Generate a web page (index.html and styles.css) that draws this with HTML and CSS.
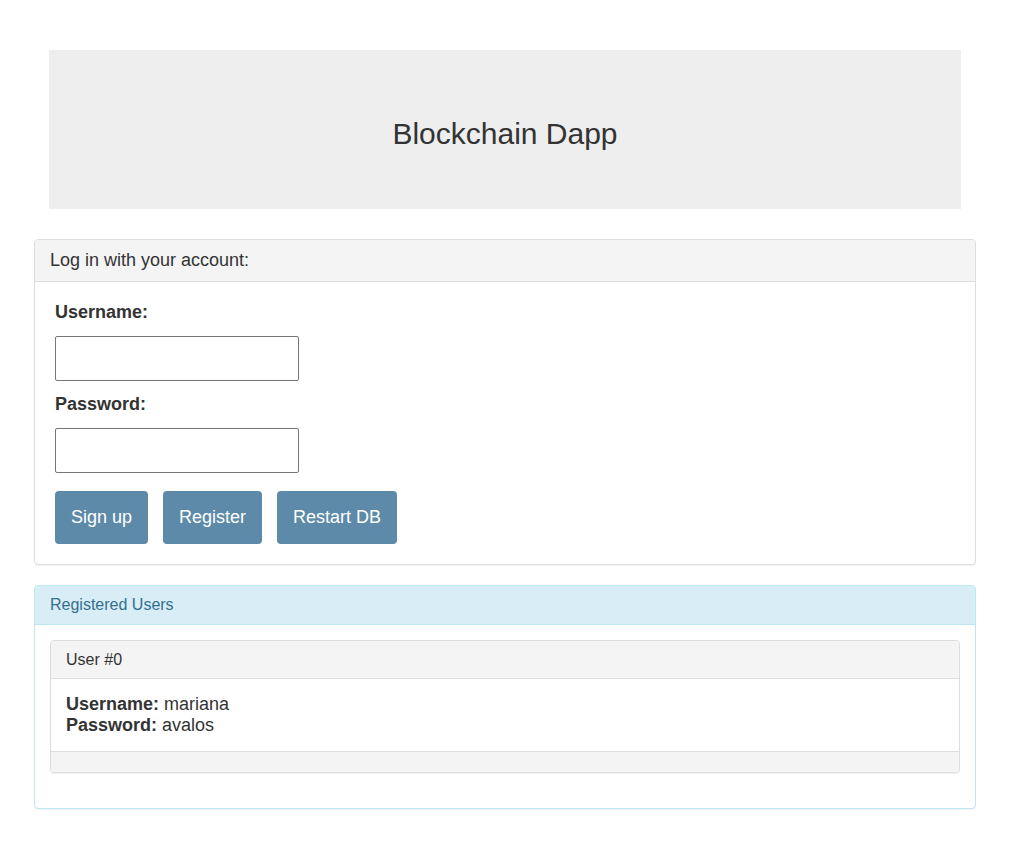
FILE: index.html
```html
<!DOCTYPE html>
<html>
<head>
<meta charset="utf-8">
<title>Blockchain Dapp</title>
<link rel="stylesheet" href="styles.css">
</head>
<body>
<div class="container">
  <div class="jumbotron">
    <h1 class="title">Blockchain Dapp</h1>
  </div>

  <div class="panel panel-default">
    <div class="panel-heading login-heading">Log in with your account:</div>
    <div class="panel-body login-body">
      <label class="field-label" for="username">Username:</label>
      <input class="field-input" id="username" type="text">
      <label class="field-label" for="password">Password:</label>
      <input class="field-input" id="password" type="password">
      <div class="btn-row">
        <button class="btn">Sign up</button>
        <button class="btn">Register</button>
        <button class="btn">Restart DB</button>
      </div>
    </div>
  </div>

  <div class="panel panel-info">
    <div class="panel-heading info-heading">Registered Users</div>
    <div class="panel-body users-body">
      <div class="panel panel-default user-panel">
        <div class="panel-heading user-heading">User #0</div>
        <div class="user-body">
          <div><b>Username:</b> mariana</div>
          <div><b>Password:</b> avalos</div>
        </div>
        <div class="user-footer"></div>
      </div>
    </div>
  </div>
</div>
</body>
</html>
```

FILE: styles.css
```css
* { box-sizing: border-box; }

body {
  margin: 0;
  font-family: "Liberation Sans", Arial, sans-serif;
  color: #333;
  background: #fff;
}

.container {
  width: 942px;
  margin-left: 34px;
  padding-top: 50px;
}

.jumbotron {
  margin: 0 15px 30px;
  height: 159px;
  background: #eeeeee;
  display: flex;
  align-items: center;
  justify-content: center;
  padding-top: 8px;
}

.title {
  margin: 0;
  font-size: 30px;
  font-weight: normal;
  color: #333;
}

.panel {
  border: 1px solid #ddd;
  border-radius: 4px;
  background: #fff;
  margin-bottom: 20px;
  box-shadow: 0 1px 1px rgba(0,0,0,0.05);
}

.panel-heading {
  border-bottom: 1px solid #ddd;
  background: #f4f4f4;
  border-radius: 3px 3px 0 0;
}

.login-heading {
  padding: 10px 15px;
  font-size: 18px;
  line-height: 21px;
}

.login-body {
  padding: 19px 20px 20px;
}

.field-label {
  display: block;
  font-size: 18px;
  font-weight: bold;
  line-height: 22px;
  margin-bottom: 13px;
}

.field-input {
  display: block;
  width: 244px;
  height: 45px;
  border: 1px solid #767676;
  border-radius: 2px;
  margin: 0 0 12px;
  font-size: 18px;
  padding: 4px 8px;
}

.btn-row {
  display: flex;
  gap: 15px;
  margin-top: 18px;
}

.btn {
  height: 53px;
  padding: 0 16px;
  background: #5d8aa8;
  color: #fff;
  border: none;
  border-radius: 4px;
  font-family: "Liberation Sans", Arial, sans-serif;
  font-size: 18px;
}

.panel-info {
  border-color: #bce8f1;
}

.info-heading {
  background: #d9edf7;
  border-bottom-color: #bce8f1;
  color: #31708f;
  padding: 10px 15px;
  font-size: 16px;
  line-height: 18px;
}

.users-body {
  padding: 15px;
}

.user-panel {
  margin-bottom: 20px;
}

.user-heading {
  padding: 10px 15px;
  font-size: 16px;
  line-height: 17px;
}

.user-body {
  padding: 15px;
  font-size: 18px;
  line-height: 21px;
}

.user-footer {
  height: 21px;
  background: #f4f4f4;
  border-top: 1px solid #ddd;
  border-radius: 0 0 3px 3px;
}
```
